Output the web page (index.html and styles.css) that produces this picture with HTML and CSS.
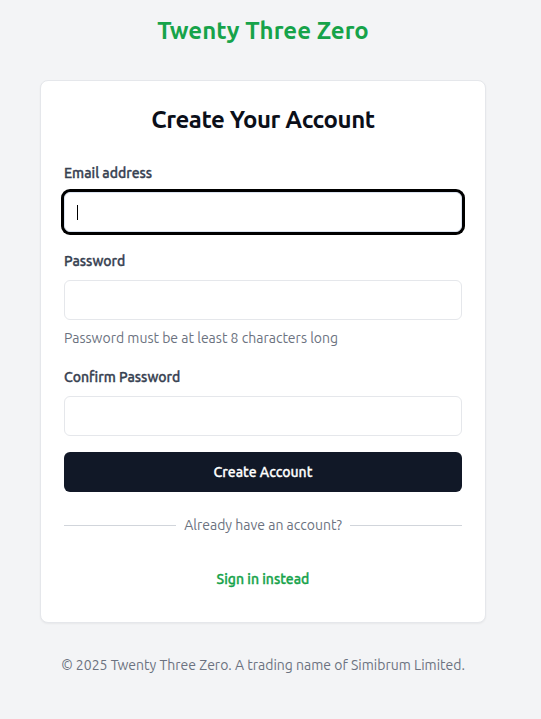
FILE: index.html
```html
<!DOCTYPE html>
<html lang="en">
<head>
<meta charset="utf-8">
<title>Create Your Account - Twenty Three Zero</title>
<link rel="stylesheet" href="styles.css">
</head>
<body>
<div class="page">
  <h1 class="brand">Twenty Three Zero</h1>
  <main class="card">
    <h2 class="card-title">Create Your Account</h2>
    <form class="form">
      <div class="field">
        <label class="label" for="email">Email address</label>
        <div class="input-wrap">
          <input class="input is-focused" id="email" type="email" autofocus>
          <span class="caret"></span>
        </div>
      </div>
      <div class="field">
        <label class="label" for="password">Password</label>
        <input class="input" id="password" type="password">
        <p class="hint">Password must be at least 8 characters long</p>
      </div>
      <div class="field">
        <label class="label" for="confirm">Confirm Password</label>
        <input class="input" id="confirm" type="password">
      </div>
      <button class="btn-primary" type="button">Create Account</button>
    </form>
    <div class="divider">
      <span class="divider-line"></span>
      <span class="divider-text">Already have an account?</span>
      <span class="divider-line"></span>
    </div>
    <a class="signin" href="#">Sign in instead</a>
  </main>
  <footer class="footer">© 2025 Twenty Three Zero. A trading name of Simibrum Limited.</footer>
</div>
</body>
</html>
```

FILE: styles.css
```css
* { box-sizing: border-box; }
html, body { margin: 0; padding: 0; }
body {
  background: #f3f4f6;
  font-family: Ubuntu, "Noto Sans", "Open Sans", sans-serif;
  color: #111827;
}
.page {
  width: 526px;
  padding: 15px 40px 0;
  display: flex;
  flex-direction: column;
  align-items: center;
}
.brand {
  margin: 0 0 33px;
  font-size: 24px;
  line-height: 32px;
  font-weight: 700;
  color: #16a34a;
}
.card {
  width: 100%;
  background: #fff;
  border: 1px solid #e5e7eb;
  border-radius: 8px;
  box-shadow: 0 1px 2px rgba(0,0,0,0.05);
  padding: 23px;
}
.card-title {
  margin: 0 0 27px;
  text-align: center;
  font-size: 24px;
  line-height: 32px;
  font-weight: 700;
  letter-spacing: -0.4px;
  color: #0b0f19;
}
.form {
  display: flex;
  flex-direction: column;
}
.field { display: flex; flex-direction: column; }
.field + .field { margin-top: 19px; }
.label {
  display: block;
  font-size: 14px;
  line-height: 20px;
  font-weight: 500;
  -webkit-text-stroke: 0.35px currentColor;
  color: #374151;
  margin-bottom: 9px;
}
.input-wrap { position: relative; }
.input {
  display: block;
  width: 100%;
  height: 40px;
  padding: 0 12px;
  border: 1px solid #e5e7eb;
  border-radius: 6px;
  background: #fff;
  font: inherit;
  font-size: 14px;
  outline: none;
  caret-color: transparent;
}
.input.is-focused {
  border-color: #dbe3f0;
  box-shadow: 0 0 0 3px #000;
}
.caret {
  position: absolute;
  left: 13px;
  top: 13px;
  width: 1px;
  height: 15px;
  background: #000;
}
.hint {
  margin: 8px 0 0;
  font-size: 14px;
  line-height: 20px;
  color: #6b7280;
}
.btn-primary {
  margin-top: 16px;
  height: 40px;
  width: 100%;
  border: 0;
  border-radius: 6px;
  background: #111827;
  color: #fff;
  font: inherit;
  font-size: 14px;
  font-weight: 500;
  -webkit-text-stroke: 0.3px currentColor;
}
.divider {
  margin-top: 23px;
  display: flex;
  align-items: center;
  gap: 8px;
}
.divider-line {
  flex: 1;
  height: 1px;
  background: #d1d5db;
}
.divider-text {
  font-size: 14px;
  line-height: 20px;
  color: #6b7280;
}
.signin {
  margin-top: 24px;
  height: 40px;
  display: flex;
  align-items: center;
  justify-content: center;
  font-size: 14px;
  font-weight: 500;
  -webkit-text-stroke: 0.35px currentColor;
  color: #16a34a;
  text-decoration: none;
}
.footer {
  margin-top: 32px;
  font-size: 14px;
  line-height: 20px;
  color: #6b7280;
  text-align: center;
}
```
